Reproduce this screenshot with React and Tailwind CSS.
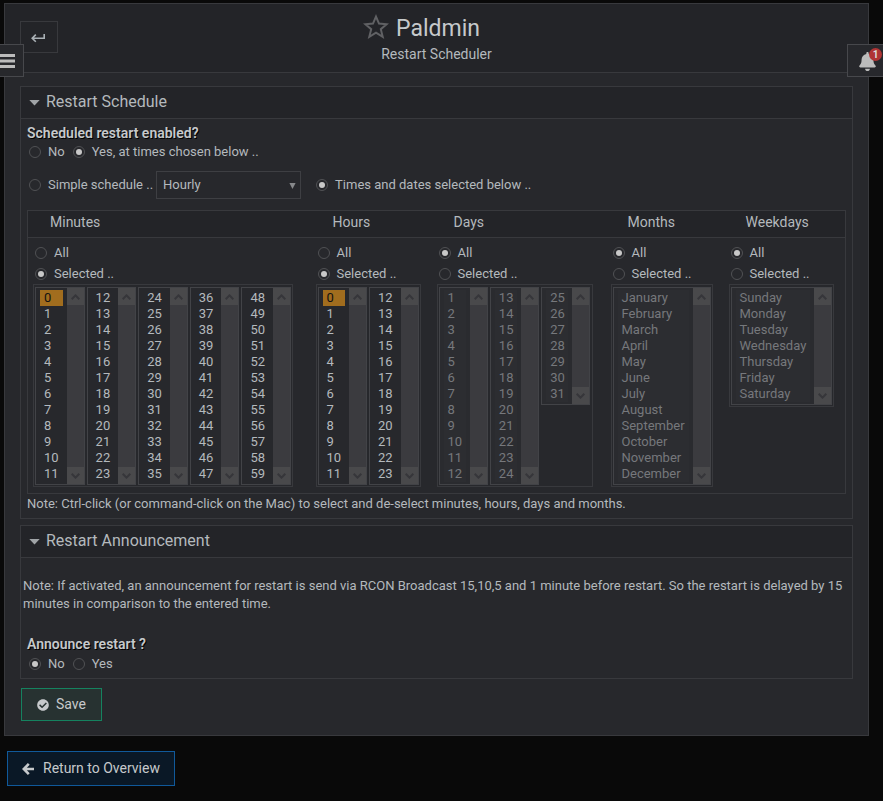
import React from 'react';
import { FaBell, FaCheckCircle } from 'react-icons/fa';

const range = (from, to) => Array.from({ length: to - from + 1 }, (_, i) => String(from + i));

const MONTHS = ['January', 'February', 'March', 'April', 'May', 'June', 'July', 'August', 'September', 'October', 'November', 'December'];
const WEEKDAYS = ['Sunday', 'Monday', 'Tuesday', 'Wednesday', 'Thursday', 'Friday', 'Saturday'];

const GROUPS = [
  { name: 'Minutes', col: 'w-[283px]', box: 'w-[260px]', active: true, lists: [range(0, 11), range(12, 23), range(24, 35), range(36, 47), range(48, 59)], value: '0' },
  { name: 'Hours', col: 'w-[121px]', box: 'w-[105px]', active: true, lists: [range(0, 11), range(12, 23)], value: '0' },
  { name: 'Days', col: 'w-[174px]', box: 'w-[156px]', active: false, lists: [range(1, 12), range(13, 24), range(25, 31)] },
  { name: 'Months', col: 'w-[118px]', box: 'w-[102px]', active: false, lists: [MONTHS] },
  { name: 'Weekdays', col: '', box: 'w-[105px]', active: false, lists: [WEEKDAYS] },
];

function Radio({ name, label, checked }) {
  return (
    <label className="flex items-center gap-[7px]">
      <input
        type="radio"
        name={name}
        defaultChecked={checked}
        className="grid size-3 shrink-0 appearance-none place-content-center rounded-full border border-[#505154] before:size-1.5 before:rounded-full before:content-[''] checked:before:bg-[#c8c8c8]"
      />
      <span>{label}</span>
    </label>
  );
}

function Arrow({ down }) {
  return (
    <span className="flex size-[17px] items-center justify-center bg-[#49494b]">
      <svg width="9" height="6" viewBox="0 0 9 6" fill="none" stroke="#36363a" strokeWidth="2">
        <path d={down ? 'M.7 .8 4.5 4.6 8.3 .8' : 'M.7 5.2 4.5 1.4 8.3 5.2'} />
      </svg>
    </span>
  );
}

function ListBox({ label, items, active, value }) {
  return (
    <div className="flex min-w-0 flex-1 border border-[#424347]">
      <div className={`min-w-0 flex-1 py-0.5 pl-1 pr-1 ${active ? '' : 'bg-[#2a2b2f]'}`}>
        <select
          multiple
          size={items.length}
          aria-label={label}
          disabled={!active}
          defaultValue={value ? [value] : []}
          className={`block w-full appearance-none overflow-hidden bg-none text-[13px] leading-4 outline-none disabled:opacity-100 ${active ? 'bg-transparent text-[#b4b9bd]' : 'bg-[#2c2d31] text-[#76787c]'}`}
        >
          {items.map((item) => (
            <option
              key={item}
              value={item}
              className={`h-4 min-h-4 px-1 py-0 leading-4 checked:bg-[linear-gradient(#a16d1e,#a16d1e)] checked:text-[#111] ${active ? 'text-[#b4b9bd]' : 'text-[#76787c]'}`}
            >
              {item}
            </option>
          ))}
        </select>
      </div>
      <div className="flex w-[17px] shrink-0 flex-col justify-between bg-[#3b3b3f]" aria-hidden="true">
        <Arrow />
        <Arrow down />
      </div>
    </div>
  );
}

function Card({ title, children }) {
  return (
    <section className="border border-[#38393d]">
      <h2 className="flex h-8 items-center gap-1.5 border-b border-[#38393d] bg-[#232428] pb-0.5 pl-2 text-base leading-5 text-[#b4b9bd]">
        <svg width="11" height="8" viewBox="0 0 11 8" fill="#a0a4a7"><path d="M.3 2h10.4L5.5 7.6z" /></svg>
        <span>{title}</span>
      </h2>
      {children}
    </section>
  );
}

const question = 'text-sm font-semibold leading-5 text-[#c6c9cb] [text-shadow:1px_1px_0_#000]';

export default function App() {
  return (
    <div className="min-h-screen bg-[#090909] pt-[3px] font-['Roboto','Liberation_Sans',sans-serif] text-[13px] leading-[18px] text-[#b4b9bd]">
      <main className="ml-1 mr-3.5 border border-[#38393d] bg-[#27282c]">
        <header className="grid h-[69px] grid-cols-[1fr_auto_1fr] border-b border-[#38393d] bg-[#232428]">
          <div className="pl-[15px] pt-[17px]">
            <button type="button" aria-label="Back" className="flex h-8 w-[38px] items-center justify-center border border-[#38393d] pr-0.5 pt-px">
              <svg width="14" height="10" viewBox="0 0 14 10" fill="none" stroke="#a9b0b5" strokeWidth="1.6">
                <path d="M13.2 1v4.3H1.5M4.8 1.6 1.2 5.3l3.6 3.5" />
              </svg>
            </button>
          </div>
          <div className="flex flex-col items-center pt-2">
            <h1 className="flex items-center gap-[7px] pr-[30px] text-[23px] leading-8 text-[#c6c9cb]">
              <svg className="-mt-1" width="26" height="25" viewBox="0 0 26 25" fill="none" stroke="#606164" strokeWidth="2">
                <path d="M13 2.6 16 9.6 23.7 10.2 17.8 15.2 19.7 22.8 13 18.7 6.3 22.8 8.2 15.2 2.3 10.2 10 9.6z" />
              </svg>
              <span className="pt-0.5 leading-[30px]">Paldmin</span>
            </h1>
            <p className="text-sm leading-5">Restart Scheduler</p>
          </div>
        </header>

        <div className="flex flex-col gap-1.5 px-[15px] pb-3.5 pt-[13px]">
          <Card title="Restart Schedule">
            <div role="radiogroup" aria-labelledby="enabled-question" className="px-1.5 pt-1">
              <p id="enabled-question" className={question}>Scheduled restart enabled?</p>
              <div className="flex gap-2 pl-0.5">
                <Radio name="enabled" label="No" />
                <Radio name="enabled" label="Yes, at times chosen below .." checked />
              </div>
            </div>
            <div className="flex items-center px-1.5 pb-[11px] pl-2 pt-2.5">
              <Radio name="mode" label="Simple schedule .." />
              <div className="relative ml-[3px] mr-[15px]">
                <select aria-label="Simple schedule" className="block h-7 w-[145px] appearance-none border border-[#3e3f43] bg-transparent px-1.5 text-[13px] leading-5">
                  <option>Hourly</option>
                </select>
                <svg className="pointer-events-none absolute right-[5px] top-3" width="7" height="6" viewBox="0 0 7 6" fill="#87898b"><path d="M.4 0h6.2L3.5 6z" /></svg>
              </div>
              <Radio name="mode" label="Times and dates selected below .." checked />
            </div>
            <div className="px-1.5">
              <table className="w-full table-fixed border border-[#38393d]">
                <thead>
                  <tr className="border-b border-[#38393d] bg-[#232428]">
                    {GROUPS.map((g) => (
                      <th key={g.name} scope="col" className={`${g.col} h-[27px] pb-[5px] pl-[22px] text-left text-sm font-normal leading-5`}>{g.name}</th>
                    ))}
                  </tr>
                </thead>
                <tbody>
                  <tr className="align-top">
                    {GROUPS.map((g) => (
                      <td key={g.name} className="pb-1.5 pl-[5px] pt-1">
                        <div className="flex h-[21px] items-center pl-0.5"><Radio name={g.name} label="All" checked={!g.active} /></div>
                        <div className="flex h-[21px] items-center pl-0.5"><Radio name={g.name} label="Selected .." checked={g.active} /></div>
                        <div className={`${g.box} flex items-start gap-x-0.5 border border-[#38393d] px-px pb-px pt-0.5`}>
                          {g.lists.map((items) => (
                            <ListBox key={items[0]} label={`${g.name} ${items[0]} to ${items[items.length - 1]}`} items={items} active={g.active} value={items.includes(g.value) ? g.value : null} />
                          ))}
                        </div>
                      </td>
                    ))}
                  </tr>
                </tbody>
              </table>
              <p className="pb-[5px] pt-px">Note: Ctrl-click (or command-click on the Mac) to select and de-select minutes, hours, days and months.</p>
            </div>
          </Card>

          <Card title="Restart Announcement">
            <p className="px-0.5 pt-[19px]">
              Note: If activated, an announcement for restart is send via RCON Broadcast 15,10,5 and 1 minute before restart. So the restart is delayed by 15 minutes in comparison to the entered time.
            </p>
            <div role="radiogroup" aria-labelledby="announce-question" className="px-1.5 pb-[5px] pt-[21px]">
              <p id="announce-question" className={question}>Announce restart ?</p>
              <div className="flex gap-2 pl-0.5 pt-px">
                <Radio name="announce" label="No" checked />
                <Radio name="announce" label="Yes" />
              </div>
            </div>
          </Card>

          <button type="button" className="ml-px mt-[3px] flex h-[33px] w-fit items-center gap-[7px] self-start border border-[#15825f] bg-[#273231] px-[15px] text-sm leading-5 text-[#c6c9cb]">
            <FaCheckCircle className="size-3" />
            <span className="pb-px">Save</span>
          </button>
        </div>
      </main>

      <a href="#overview" className="ml-[7px] mt-[15px] flex h-[35px] w-fit items-center gap-[9px] border border-[#10599a] bg-[#0a1826] px-3.5 text-sm leading-5 text-[#c6c9cb]">
        <svg width="12" height="12" viewBox="0 0 12 12" fill="none" stroke="#c6c9cb" strokeWidth="2.6">
          <path d="M12 6H2.5M6.8 .9 1.8 6l5 5.1" />
        </svg>
        <span className="pb-px">Return to Overview</span>
      </a>

      <button type="button" aria-label="Menu" className="absolute left-0 top-11 flex h-[33px] w-6 items-center border border-l-0 border-[#47484c] bg-[#27282c]">
        <svg width="15" height="14" viewBox="0 0 15 14" fill="#bcbcbc"><path d="M0 0h15v3H0zM0 5.5h15v3H0zM0 11h15v3H0z" /></svg>
      </button>
      <button type="button" aria-label="Notifications" className="absolute right-0 top-11 flex h-[33px] w-9 items-center border border-r-0 border-[#47484c] bg-[#27282c] pl-2.5 pt-0.5">
        <FaBell className="size-[19px] text-[#bcbcbc]" />
        <span className="absolute right-px top-[3px] flex size-[13px] items-center justify-center rounded-full bg-[#b03434] text-[10px] font-bold leading-3 text-[#dddddd]">1</span>
      </button>
    </div>
  );
}
